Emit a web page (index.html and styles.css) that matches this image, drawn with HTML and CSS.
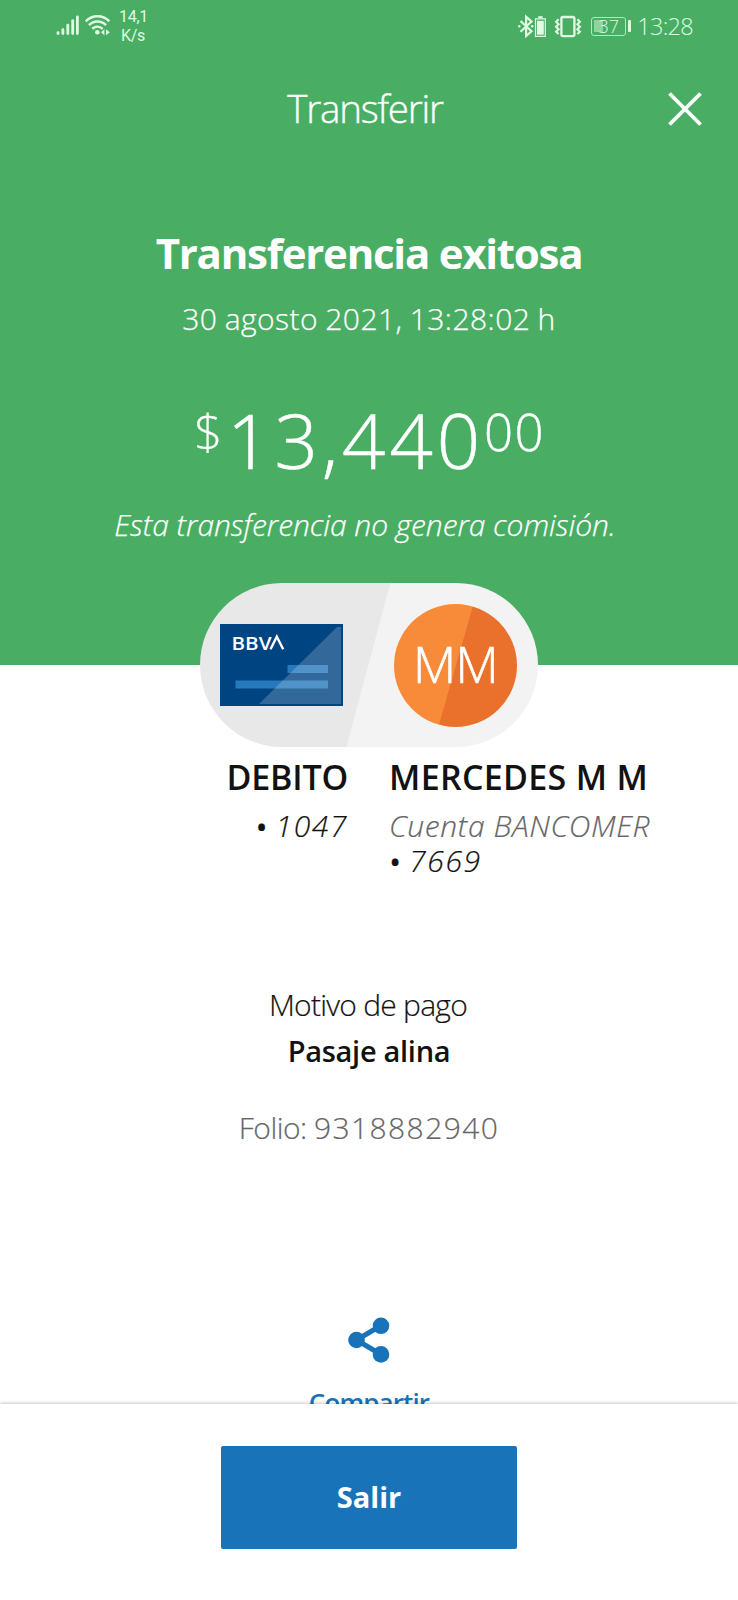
FILE: index.html
```html
<!DOCTYPE html>
<html lang="es">
<head>
<meta charset="utf-8">
<meta name="viewport" content="width=device-width">
<title>Transferir</title>
<link rel="stylesheet" href="styles.css">
</head>
<body>
<div class="screen">
  <header class="hero">
    <div class="status">
      <div class="status-group">
        <svg class="signal" width="54" height="24" viewBox="0 0 54 24" fill="none" stroke="#dffbe2" stroke-linecap="round">
          <path stroke-width="2.8" d="M2 21.6v-1M6.9 21.6v-4M11.8 21.6v-8.5M16.7 21.6v-13M21.4 21.6V4.8"/>
          <path stroke-width="2.5" stroke-linecap="butt" d="M29.8 9.3C36.3 2.6 46.8 2.6 53.2 9.3M33 13.2c4.8-4.8 12.2-4.8 17 0M36.3 16.8c3.2-2.9 7.3-2.9 10.4 0"/>
          <circle cx="41.3" cy="20.2" r="2.3" fill="#dffbe2" stroke="none"/>
          <path fill="#dffbe2" stroke="none" d="M45 20.2l3.4-3v6zM53.8 20.2l-3.8-3v6z"/>
        </svg>
        <div class="rate"><span>14,1</span><span>K/s</span></div>
      </div>
      <div class="status-group">
        <svg class="indicators" width="64" height="24" viewBox="0 0 64 24" fill="none" stroke="#dffbe2">
          <path stroke-width="2.2" d="M2.5 7l11 10.2-5.4 4.8V2.8l5.4 4.8L2.5 17.8"/>
          <circle cx="1.3" cy="12.3" r="1.2" fill="#dffbe2" stroke="none"/>
          <circle cx="14.2" cy="12.3" r="1.2" fill="#dffbe2" stroke="none"/>
          <path stroke-width="1.2" d="M17.5 4.8h9.8v17.6h-9.8z"/>
          <path stroke-width="2" d="M20.2 3.2h4.4"/>
          <path fill="#dffbe2" stroke="none" d="M19 6.8h6.8v13.9H19z"/>
          <rect x="43.4" y="3" width="13" height="19.2" rx="1.6" stroke-width="2.3"/>
          <path stroke-width="2.2" d="M40.2 5.2l-2.6 2.5 2.6 2.5-2.6 2.5 2.6 2.5-2.6 2.5 2.6 2.3M59.8 5.2l2.6 2.5-2.6 2.5 2.6 2.5-2.6 2.5 2.6 2.5-2.6 2.3" transform="translate(50 0) scale(.96 1) translate(-50 0)"/>
        </svg>
        <div class="battery"><span>37</span></div>
        <span class="clock">13:28</span>
      </div>
    </div>
    <div class="appbar">
      <span class="appbar-title">Transferir</span>
      <svg class="close" width="34" height="34" viewBox="0 0 34 34" stroke="#fff" stroke-width="3.8"><path d="M1.5 1.5l31 31M32.5 1.5l-31 31"/></svg>
    </div>
    <h1 class="title">Transferencia exitosa</h1>
    <p class="date">30 agosto 2021, 13:28:02 h</p>
    <p class="amount"><span class="currency">$</span><span class="units">13,440</span><span class="cents">00</span></p>
    <p class="fee">Esta transferencia no genera comisión.</p>
  </header>
  <main class="content">
    <div class="pill">
      <svg class="card" width="123" height="82" viewBox="0 0 123 82">
        <path fill="#004481" d="M0 0h123v82H0z"/>
        <path fill="#2579bc" d="M67.5 41H108v8H67.5zM15.5 56.5H108v8H15.5z"/>
        <path fill="#fff" fill-opacity=".2" d="M117 3h4v77H39z"/>
        <text class="card-brand" x="11.5" y="25.5" textLength="40" lengthAdjust="spacingAndGlyphs">BBV</text>
        <path fill="none" stroke="#fff" stroke-width="2.4" d="M50.5 25.2l6.3-12.6 6.4 12.6"/>
      </svg>
      <div class="avatar">MM</div>
    </div>
    <div class="accounts">
      <div class="account from">
        <div class="name">DEBITO</div>
        <div class="number"><b>•</b> 1047</div>
      </div>
      <div class="account to">
        <div class="name">MERCEDES M M</div>
        <div class="bank">Cuenta BANCOMER</div>
        <div class="number"><b>•</b> 7669</div>
      </div>
    </div>
    <p class="label">Motivo de pago</p>
    <p class="reason">Pasaje alina</p>
    <p class="folio">Folio: <span class="folio-number">9318882940</span></p>
    <div class="share">
      <svg width="42" height="48" viewBox="0 0 42 48" fill="#1973b8"><path fill="none" stroke="#1973b8" stroke-width="5" d="M33 9.5L8.5 24 33 38.5"/><circle cx="8.5" cy="24" r="8.3"/><circle cx="33" cy="9.8" r="8.3"/><circle cx="33" cy="38.4" r="8.3"/></svg>
      <span class="share-text">Compartir</span>
    </div>
  </main>
  <footer class="footer"><button class="exit">Salir</button></footer>
</div>
</body>
</html>
```
FILE: styles.css
```css
* { box-sizing: border-box; }
body { margin: 0; font-family: "Open Sans", "Noto Sans", sans-serif; font-weight: 300; color: #121212; background: #fff; }
p, h1 { margin: 0; }
svg { display: block; flex: none; }

.screen { height: 1600px; width: 738px; display: flex; flex-direction: column; overflow: hidden; }

.hero { flex: none; height: 665px; background: #49ae64; color: #fff; text-align: center; }

.status { height: 52px; padding: 0 44px 0 56px; display: flex; justify-content: space-between; color: #dffbe2; }
.status-group { display: flex; align-items: center; }
.signal { margin-bottom: 4px; }
.rate { display: flex; flex-direction: column; margin: 0 0 0 9px; width: 28px; font-family: Roboto, sans-serif; font-size: 16px; font-weight: 400; line-height: 19px; letter-spacing: -.3px; white-space: nowrap; }
.indicators { margin-right: 9px; }
.battery { position: relative; width: 35px; height: 19px; border: 1.5px solid #b5e6bd; border-radius: 3px; font-size: 18px; line-height: 16px; background: linear-gradient(#8fd39e, #8fd39e) 2px 2px / 9px 12px no-repeat; }
.battery::after { content: ""; position: absolute; right: -6px; top: 2px; width: 3px; height: 12px; border-radius: 1px; background: #dffbe2; }
.clock { margin: -1px 1px 0 11px; font-size: 23.5px; letter-spacing: -.7px; }

.appbar { height: 110px; display: grid; grid-template-columns: 1fr auto 1fr; align-items: center; padding: 0 36px; }
.appbar-title { grid-column: 2; margin: 1px 8px 0 0; font-size: 38.5px; letter-spacing: -1.2px; -webkit-text-stroke: .4px; }
.close { justify-self: end; margin-top: 3px; }

.title { margin-top: 63px; font-size: 42px; line-height: 56px; font-weight: 700; letter-spacing: -1.25px; }
.date { margin-top: 18px; font-size: 30px; line-height: 40px; letter-spacing: .45px; word-spacing: -1px; -webkit-text-stroke: .25px; }
.amount { display: flex; margin: 56px 0 0 194px; font-size: 76px; line-height: 90px; -webkit-text-stroke: .6px; }
.currency { width: 33px; font-size: 50px; line-height: 72px; text-align: left; -webkit-text-stroke: .2px; }
.units { width: 256px; text-align: left; letter-spacing: 4px; }
.cents { margin-left: 1px; font-size: 51px; line-height: 73px; letter-spacing: 1.3px; -webkit-text-stroke: .4px; }
.fee { margin: 20px 8px 0 0; font-size: 30px; line-height: 40px; font-style: italic; letter-spacing: -.06px; -webkit-text-stroke: .25px; }

.content { flex: 1; min-height: 0; display: flex; flex-direction: column; }
.pill { flex: none; align-self: center; margin-top: -82px; width: 338px; height: 164px; border-radius: 82px; padding: 0 21px 0 20px; display: flex; align-items: center; justify-content: space-between; background: linear-gradient(105deg, #e8e8e8 49.7%, #f3f3f3 50%); }
.card-brand { font-family: "Open Sans", sans-serif; font-size: 18.5px; font-weight: 600; fill: #fff; }
.avatar { width: 123px; height: 123px; border-radius: 50%; background: linear-gradient(106deg, #f78b3a 50%, #e9712c 50.5%); color: #fff; font-size: 50px; line-height: 121px; text-align: center; letter-spacing: -.6px; -webkit-text-stroke: .6px; }

.accounts { flex: none; display: grid; grid-template-columns: 348px 1fr; column-gap: 42px; margin-top: 8px; height: 132px; }
.from { text-align: right; }
.name { font-size: 34px; line-height: 45px; font-weight: 600; margin-bottom: 8px; letter-spacing: -.2px; }
.to .name { letter-spacing: .3px; margin-left: -1px; }
.number, .bank { font-size: 30px; line-height: 35px; font-style: italic; letter-spacing: 1.6px; -webkit-text-stroke: .2px; }
.number b { font-size: 27px; line-height: 1; font-weight: 600; font-style: normal; margin-right: -2px; }
.bank { color: #666; margin-left: -1px; letter-spacing: .6px; }

.label, .reason, .folio { flex: none; text-align: center; font-size: 30px; line-height: 40px; }
.label { margin-top: 98px; margin-right: 2px; letter-spacing: -.75px; -webkit-text-stroke: .2px; }
.reason { margin-top: 6px; font-size: 29px; font-weight: 600; letter-spacing: -.3px; }
.folio { margin-top: 37px; color: #666; letter-spacing: -.5px; -webkit-text-stroke: .2px; }
.folio-number { letter-spacing: 1.4px; }
.share { flex: none; margin-top: 168px; display: flex; flex-direction: column; align-items: center; color: #1973b8; }
.share-text { margin-top: 23px; font-size: 26px; line-height: 30px; font-weight: 600; letter-spacing: -.9px; }

.footer { position: relative; flex: none; height: 196px; background: #fff; box-shadow: 0 -1px 3px rgba(0, 0, 0, .22); display: flex; justify-content: center; align-items: flex-start; padding-top: 42px; }
.exit { width: 296px; height: 103px; border: 0; border-radius: 2px; background: #1973b8; color: #fff; font: 700 29px "Open Sans", sans-serif; padding: 0 0 3px; }
```
